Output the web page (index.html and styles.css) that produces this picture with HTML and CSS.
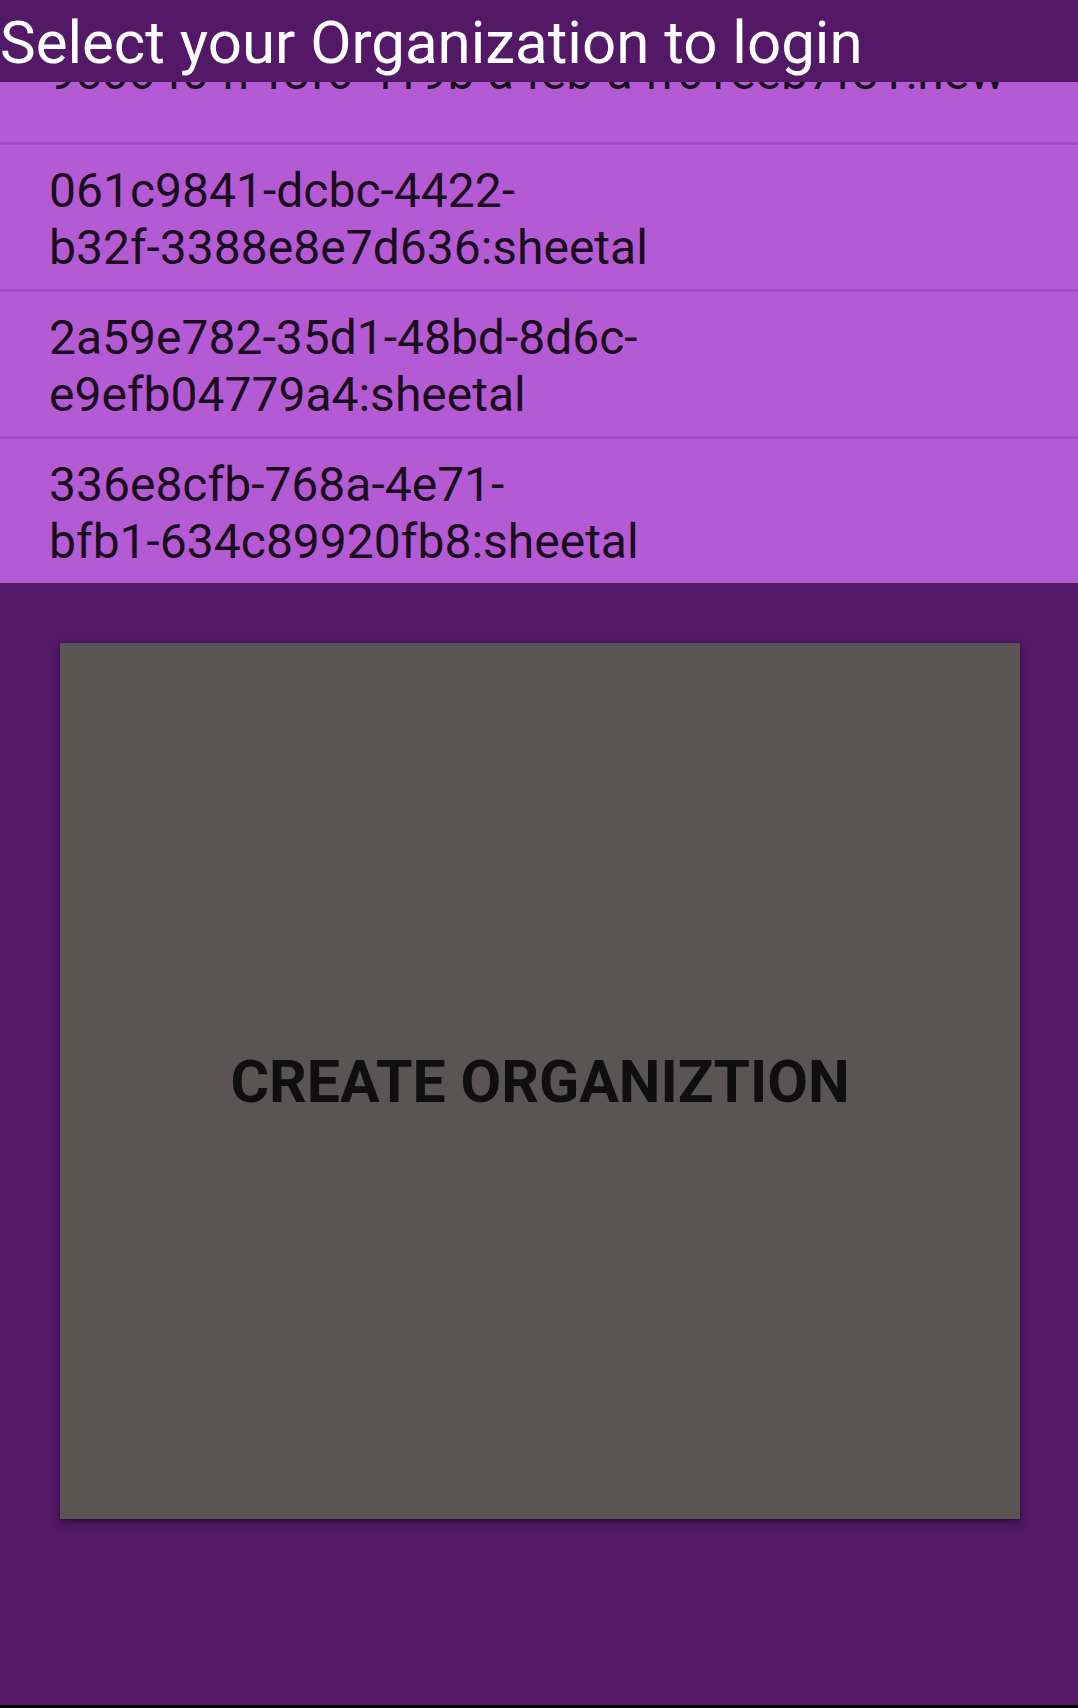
FILE: index.html
```html
<!DOCTYPE html>
<html>
<head>
<meta charset="utf-8">
<link rel="stylesheet" href="styles.css">
</head>
<body>
<div class="screen">
  <header class="appbar">
    <h1 class="title">Select your Organization to login</h1>
  </header>
  <div class="list">
    <div class="list-inner">
      <div class="row"><span class="row-text">9c66404f-f8f6-419b-a4eb-a4f61eeb7f81:new</span></div>
      <div class="row"><span class="row-text">061c9841-dcbc-4422-<span class="nb">b32f-3388e8e7d636:sheetal</span></span></div>
      <div class="row"><span class="row-text">2a59e782-35d1-48bd-8d6c-<span class="nb">e9efb04779a4:sheetal</span></span></div>
      <div class="row row-last"><span class="row-text">336e8cfb-768a-4e71-<span class="nb">bfb1-634c89920fb8:sheetal</span></span></div>
    </div>
  </div>
  <div class="action">
    <button class="create-btn">CREATE ORGANIZTION</button>
  </div>
  <div class="navedge"></div>
</div>
</body>
</html>
```
FILE: styles.css
```css
html, body {
  margin: 0;
  padding: 0;
}
body {
  background: #531866;
  font-family: Roboto, "Liberation Sans", sans-serif;
}
.screen {
  display: flex;
  flex-direction: column;
  height: 1708px;
  width: 1078px;
}
.appbar {
  height: 82px;
  flex: 0 0 82px;
  background: #531866;
  position: relative;
  z-index: 2;
  overflow: hidden;
}
.title {
  margin: 0;
  padding: 0;
  color: #ffffff;
  font-weight: 400;
  font-size: 60px;
  line-height: 70px;
  white-space: nowrap;
  position: relative;
  top: 8px;
}
.list {
  flex: 0 0 501px;
  height: 501px;
  overflow: hidden;
  background: #b55ad5;
}
.list-inner {
  margin-top: -84px;
}
.row {
  height: 140px;
  padding: 4px 49px 0 49px;
  border-bottom: 3px solid #a44dc0;
  display: flex;
  align-items: center;
  box-sizing: content-box;
}
.row-last {
  border-bottom: none;
}
.row-text {
  font-size: 48px;
  line-height: normal;
  color: #1a0e1e;
}
.nb {
  white-space: nowrap;
}
.action {
  flex: 0 0 auto;
  padding: 60px 58px 0 60px;
}
.create-btn {
  display: flex;
  align-items: center;
  justify-content: center;
  width: 960px;
  height: 876px;
  background: #585554;
  border: none;
  margin: 0;
  padding: 0;
  font-family: Roboto, "Liberation Sans", sans-serif;
  font-weight: 700;
  font-size: 59px;
  color: #0f0f0f;
  box-shadow: 0 4px 8px rgba(0, 0, 0, 0.35), 0 1px 3px rgba(0, 0, 0, 0.2);
}
.navedge {
  margin-top: auto;
  height: 3px;
  flex: 0 0 3px;
  background: #000;
}
```
